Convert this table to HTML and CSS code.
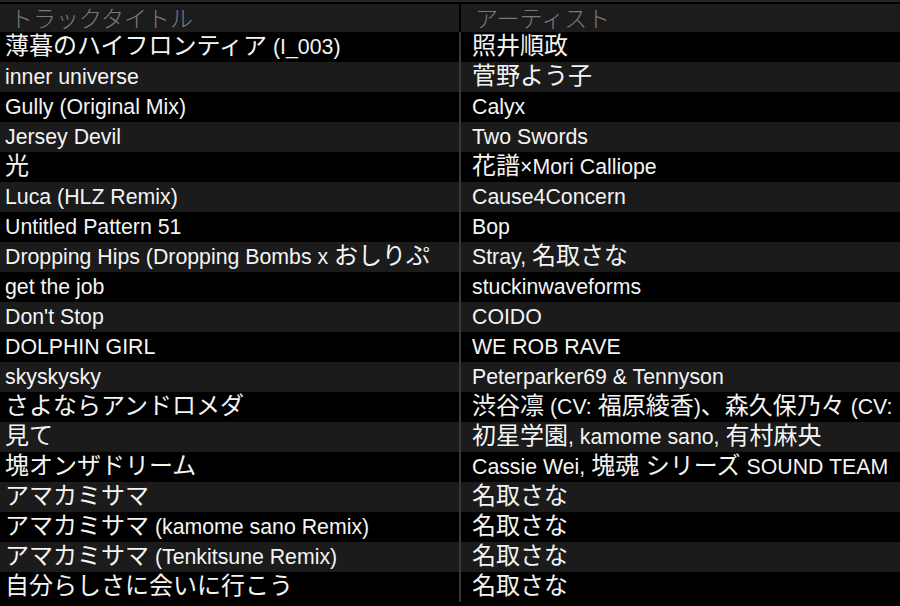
FILE: index.html
```html
<!DOCTYPE html>
<html lang="ja">
<head>
<meta charset="utf-8">
<title>Tracks</title>
<link rel="stylesheet" href="styles.css">
</head>
<body>
<div class="topstrip"></div>
<div class="table">
  <div class="row head">
    <div class="cell c1">トラックタイトル</div>
    <div class="cell c2">アーティスト</div>
  </div>
  <div class="row">
    <div class="cell c1"><span class="j">薄暮のハイフロンティア</span> (I_003)</div>
    <div class="cell c2"><span class="j">照井順政</span></div>
  </div>
  <div class="row">
    <div class="cell c1">inner universe</div>
    <div class="cell c2"><span class="j">菅野よう子</span></div>
  </div>
  <div class="row">
    <div class="cell c1">Gully (Original Mix)</div>
    <div class="cell c2">Calyx</div>
  </div>
  <div class="row">
    <div class="cell c1">Jersey Devil</div>
    <div class="cell c2">Two Swords</div>
  </div>
  <div class="row">
    <div class="cell c1"><span class="j">光</span></div>
    <div class="cell c2"><span class="j">花譜</span>×Mori Calliope</div>
  </div>
  <div class="row">
    <div class="cell c1">Luca (HLZ Remix)</div>
    <div class="cell c2">Cause4Concern</div>
  </div>
  <div class="row">
    <div class="cell c1">Untitled Pattern 51</div>
    <div class="cell c2">Bop</div>
  </div>
  <div class="row">
    <div class="cell c1">Dropping Hips (Dropping Bombs x <span class="j">おしりぷ</span></div>
    <div class="cell c2">Stray, <span class="j">名取さな</span></div>
  </div>
  <div class="row">
    <div class="cell c1">get the job</div>
    <div class="cell c2">stuckinwaveforms</div>
  </div>
  <div class="row">
    <div class="cell c1">Don't Stop</div>
    <div class="cell c2">COIDO</div>
  </div>
  <div class="row">
    <div class="cell c1">DOLPHIN GIRL</div>
    <div class="cell c2">WE ROB RAVE</div>
  </div>
  <div class="row">
    <div class="cell c1">skyskysky</div>
    <div class="cell c2">Peterparker69 &amp; Tennyson</div>
  </div>
  <div class="row">
    <div class="cell c1"><span class="j">さよならアンドロメダ</span></div>
    <div class="cell c2"><span class="j">渋谷凛</span> (CV: <span class="j">福原綾香</span>)<span class="j">、森久保乃々</span> (CV:</div>
  </div>
  <div class="row">
    <div class="cell c1"><span class="j">見て</span></div>
    <div class="cell c2"><span class="j">初星学園</span>, kamome sano, <span class="j">有村麻央</span></div>
  </div>
  <div class="row">
    <div class="cell c1"><span class="j">塊オンザドリーム</span></div>
    <div class="cell c2">Cassie Wei, <span class="j">塊魂 シリーズ</span> SOUND TEAM</div>
  </div>
  <div class="row">
    <div class="cell c1"><span class="j">アマカミサマ</span></div>
    <div class="cell c2"><span class="j">名取さな</span></div>
  </div>
  <div class="row">
    <div class="cell c1"><span class="j">アマカミサマ</span> (kamome sano Remix)</div>
    <div class="cell c2"><span class="j">名取さな</span></div>
  </div>
  <div class="row">
    <div class="cell c1"><span class="j">アマカミサマ</span> (Tenkitsune Remix)</div>
    <div class="cell c2"><span class="j">名取さな</span></div>
  </div>
  <div class="row">
    <div class="cell c1"><span class="j">自分らしさに会いに行こう</span></div>
    <div class="cell c2"><span class="j">名取さな</span></div>
  </div>
</div>
</body>
</html>
```
FILE: styles.css
```css
html, body {
  margin: 0;
  padding: 0;
  background: #000;
}
body {
  width: 900px;
  height: 606px;
  overflow: hidden;
  font-family: "Liberation Sans", "Noto Sans CJK JP", sans-serif;
  font-size: 21.3px;
  color: #f4f4f4;
}
.topstrip {
  height: 2px;
  background: #252525;
  margin-bottom: 2px;
}
.table {
  display: flex;
  flex-direction: column;
}
.row {
  display: grid;
  grid-template-columns: 461px 1fr;
  height: 30px;
  line-height: 30px;
  background: #000;
}
.row:nth-child(odd) {
  background: #1b1b1b;
}
.cell {
  white-space: nowrap;
  overflow: hidden;
  box-sizing: border-box;
}
.c1 {
  padding-left: 5px;
  border-right: 2px solid #383838;
}
.c2 {
  padding-left: 11px;
}
.j {
  font-size: 24px;
  line-height: 0;
}
.row.head {
  height: 28px;
  line-height: 26px;
  background: #1c1c1c;
  font-family: "Noto Sans CJK JP", sans-serif;
  font-size: 23px;
  font-weight: 300;
  color: #7a7a7a;
}
.head .cell {
  overflow: visible;
}
.head .c1 {
  padding-left: 10px;
  border-right-color: #000;
}
.head .c2 {
  padding-left: 14px;
}
```
